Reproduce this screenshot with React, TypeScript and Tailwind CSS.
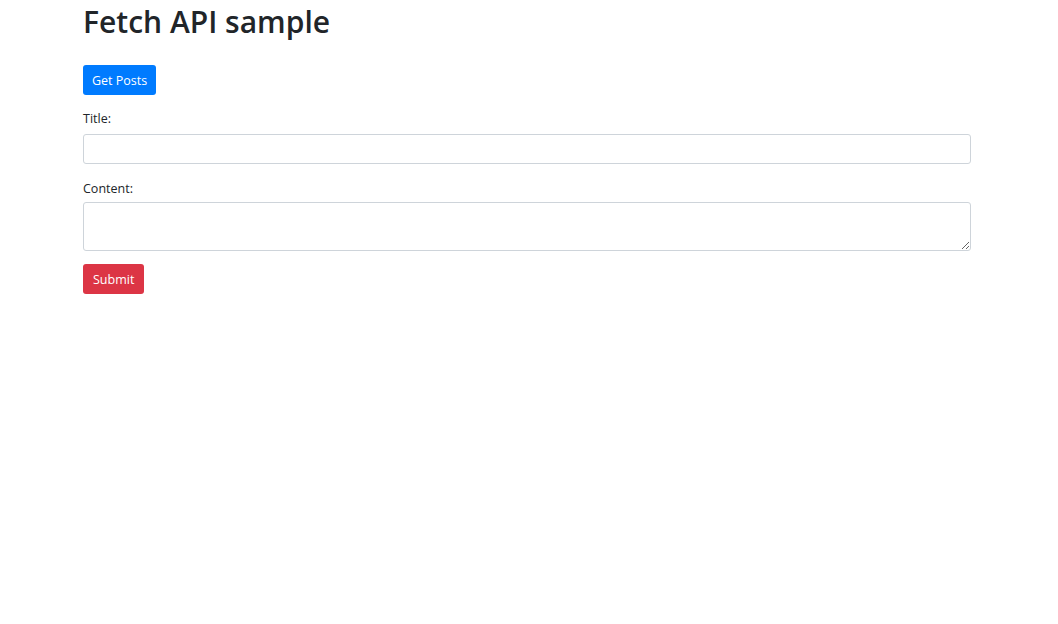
export default function App() {
  return (
    <div className="min-h-screen bg-white text-[#212529] font-['Open_Sans','Noto_Sans',sans-serif]">
      <div className="ml-[83px] w-[888px]">
        <h1 className="m-0 pt-[3px] text-[30px] font-semibold leading-[1.25]">Fetch API sample</h1>

        <div className="mt-[24px]">
          <button className="h-[30px] rounded-[3px] bg-[#007bff] px-[9px] pt-[3px] text-[12.5px] text-white">
            Get Posts
          </button>
        </div>

        <div className="mt-[14px]">
          <label className="block text-[12.5px] leading-[20px]">Title:</label>
          <input
            type="text"
            className="mt-[5px] block h-[30px] w-full rounded-[3px] border border-[#ced4da] bg-white px-2 text-[13px]"
          />
        </div>

        <div className="mt-[15px]">
          <label className="block text-[12.5px] leading-[20px]">Content:</label>
          <textarea className="mt-[3px] block h-[49px] w-full rounded-[3px] border border-[#ced4da] bg-white px-2 text-[13px]" />
        </div>

        <button className="mt-[13px] h-[30px] rounded-[3px] bg-[#dc3545] px-[10px] pt-[3px] text-[12.5px] text-white">
          Submit
        </button>
      </div>
    </div>
  );
}
